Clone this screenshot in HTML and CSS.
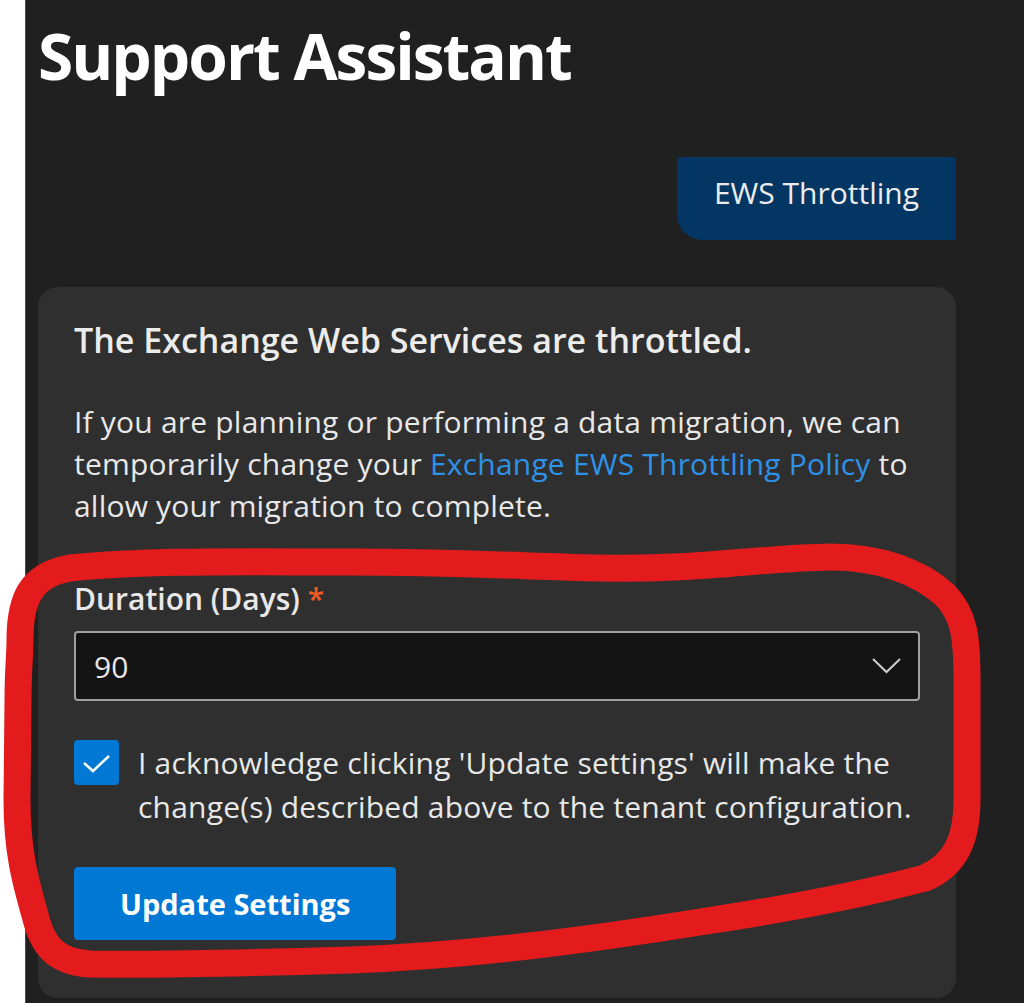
FILE: index.html
```html
<!DOCTYPE html>
<html lang="en">
<head>
  <meta charset="UTF-8" />
  <meta name="viewport" content="width=device-width, initial-scale=1.0"/>
  <title>Support Assistant</title>
  <link rel="stylesheet" href="styles.css">
</head>
<body>
  <main class="app">
    <h1 class="title">Support Assistant</h1>

    <div class="chat">
      <div class="bubble">EWS Throttling</div>

      <section class="card">
        <h2>The Exchange Web Services are throttled.</h2>
        <p>
          If you are planning or performing a data migration, we can
          temporarily change your <a href="#">Exchange EWS Throttling Policy</a> to
          allow your migration to complete.
        </p>

        <label class="field-label">Duration (Days) <span class="req">*</span></label>
        <div class="select">
          <span>90</span>
          <svg class="chevron" width="30" height="16" viewBox="0 0 30 16">
            <polyline points="1,1 14.5,14 28,1" fill="none" stroke="#cfcfcf" stroke-width="2"/>
          </svg>
        </div>

        <label class="check">
          <span class="box">
            <svg width="45" height="45" viewBox="0 0 45 45">
              <polyline points="10,23 19,31 35,16" fill="none" stroke="#fff" stroke-width="2.5"/>
            </svg>
          </span>
          <span class="check-text">I acknowledge clicking 'Update settings' will make the change(s) described above to the tenant configuration.</span>
        </label>

        <button class="primary">Update Settings</button>
      </section>
    </div>
  </main>

  <!-- red marker scribble drawn over the screenshot -->
  <svg class="markup" width="1024" height="1003" viewBox="0 0 1024 1003">
    <path d="M 20 640
             C 20 600, 30 575, 70 568
             C 150 560, 250 562, 350 562
             C 450 562, 520 566, 600 568
             C 700 570, 760 558, 830 557
             C 880 557, 920 572, 945 595
             C 965 615, 967 640, 967 680
             L 967 800
             C 967 840, 955 865, 925 878
             C 860 895, 780 910, 700 922
             C 600 938, 480 955, 350 960
             C 250 963, 150 965, 90 964
             C 55 962, 42 945, 35 915
             C 25 880, 17 850, 17 800
             L 18 700
             C 18 670, 20 655, 20 640 Z"
          fill="none" stroke="#e31b1c" stroke-width="27" stroke-linejoin="round"/>
  </svg>
</body>
</html>
```

FILE: styles.css
```css
html, body {
  margin: 0;
  padding: 0;
  height: 100%;
  overflow: hidden;
}

body {
  background: #ffffff;
  font-family: 'Open Sans', 'Noto Sans', sans-serif;
  color: #e8e8e8;
}

.app {
  margin-left: 25px;
  min-height: 100%;
  box-sizing: border-box;
  padding: 0 68px 0 12px;
  background: #202020;
  border-left: 1px solid #4a4a4a;
}

.title {
  margin: 0;
  padding-top: 24px;
  font-size: 64px;
  line-height: 64px;
  font-weight: 700;
  color: #ffffff;
  letter-spacing: -2px;
}

.chat {
  display: flex;
  flex-direction: column;
  align-items: flex-end;
  gap: 47px;
  margin-top: 69px;
}

.bubble {
  background: #033662;
  color: #ececec;
  font-size: 30px;
  line-height: 43px;
  padding: 14px 37px 26px;
  border-radius: 4px 3px 0 26px;
}

.card {
  align-self: stretch;
  background: #2f2f2f;
  border-radius: 20px;
  padding: 31px 36px 58px;
  letter-spacing: 0.2px;
}

.card h2 {
  margin: 0;
  font-size: 34px;
  line-height: 44px;
  font-weight: 600;
  letter-spacing: 0;
  color: #ececec;
}

.card p {
  margin: 39px 0 0;
  font-size: 30px;
  line-height: 42px;
}

.card a {
  color: #2e92e8;
  text-decoration: none;
}

.field-label {
  display: block;
  margin-top: 52px;
  font-size: 30px;
  line-height: 40px;
  font-weight: 600;
  letter-spacing: 0;
}

.req {
  color: #f05a28;
}

.select {
  display: flex;
  align-items: center;
  justify-content: space-between;
  margin-top: 12px;
  height: 66px;
  padding: 0 16px 0 18px;
  background: #141414;
  border: 2px solid #a0a0a0;
  border-radius: 4px;
  font-size: 30px;
}

.check {
  display: flex;
  align-items: flex-start;
  gap: 19px;
  margin-top: 39px;
}

.box {
  flex: none;
  width: 45px;
  height: 45px;
  border-radius: 4px;
  background: #0078d4;
}

.box svg {
  display: block;
}

.check-text {
  font-size: 30px;
  line-height: 44px;
  margin-top: 1px;
}

.primary {
  display: block;
  margin-top: 38px;
  height: 73px;
  padding: 0 46px;
  background: #0078d4;
  color: #ffffff;
  border: none;
  border-radius: 4px;
  font-family: inherit;
  font-size: 29px;
  font-weight: 700;
  letter-spacing: 0;
}

.markup {
  position: absolute;
  top: 0;
  left: 0;
  pointer-events: none;
}
```
